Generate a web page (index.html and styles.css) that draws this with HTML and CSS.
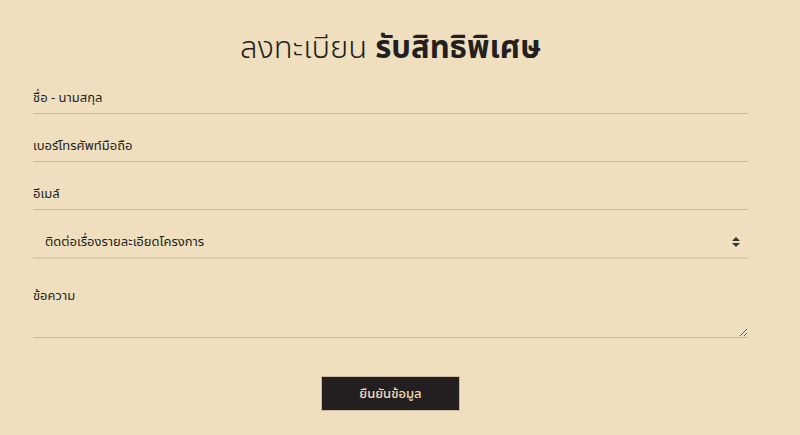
FILE: index.html
```html
<!DOCTYPE html>
<html lang="th">
<head>
    <meta charset="UTF-8">
    <meta name="viewport" content="width=device-width, initial-scale=1.0">
    <title>ลงทะเบียน รับสิทธิพิเศษ</title>
    <link rel="stylesheet" href="styles.css">
</head>
<body>
    <div class="register">
        <h1 class="register-title">ลงทะเบียน <strong>รับสิทธิพิเศษ</strong></h1>

        <!-- ฟอร์มลงทะเบียน -->
        <form class="register-form">
            <input class="field" type="text" placeholder="ชื่อ - นามสกุล">
            <input class="field" type="tel" placeholder="เบอร์โทรศัพท์มือถือ">
            <input class="field" type="email" placeholder="อีเมล์">
            <div class="select-wrap">
                <select class="field field-select">
                    <option>ติดต่อเรื่องรายละเอียดโครงการ</option>
                    <option>นัดชมโครงการ</option>
                    <option>อื่นๆ</option>
                </select>
                <svg class="select-arrow" width="8" height="10" viewBox="0 0 8 10">
                    <path d="M4 0 L8 4 H0 Z M0 6 H8 L4 10 Z" fill="#333"/>
                </svg>
            </div>
            <textarea class="field field-area" placeholder="ข้อความ"></textarea>
            <div class="actions">
                <button type="submit" class="btn-submit">ยืนยันข้อมูล</button>
            </div>
        </form>
    </div>
</body>
</html>
```

FILE: styles.css
```css
body {
    margin: 0;
    background: #efdfbf;
    font-family: "Noto Sans", "Noto Sans Thai", sans-serif;
    color: #231f20;
}
.register {
    width: 715px;
    margin-left: 33px;
    padding-top: 27px;
}
.register-title {
    margin: 0 0 1px;
    text-align: center;
    font-size: 31px;
    font-weight: 300;
    line-height: 38px;
}
.register-title strong {
    font-weight: 700;
}
.register-form {
    display: flex;
    flex-direction: column;
}
.field {
    display: block;
    width: 100%;
    box-sizing: border-box;
    height: 48px;
    padding: 14px 0 0;
    border: none;
    border-bottom: 1px solid #c9b999;
    background: transparent;
    font-family: inherit;
    font-size: 13px;
    color: #231f20;
    outline: none;
}
.field::placeholder {
    color: #231f20;
    opacity: 1;
}
.select-wrap {
    position: relative;
}
.field-select {
    -webkit-appearance: none;
    appearance: none;
    height: 49px;
    padding-left: 12px;
    border-bottom: 2px solid #ddcdaf;
}
.select-arrow {
    position: absolute;
    right: 8px;
    top: 27px;
    pointer-events: none;
}
.field-area {
    height: 79px;
    padding-top: 27px;
    resize: vertical;
}
.actions {
    display: flex;
    justify-content: center;
    padding-top: 38px;
}
.btn-submit {
    width: 139px;
    height: 35px;
    border: 1px solid #c9b999;
    background: #231f20;
    color: #efdfbf;
    font-family: inherit;
    font-size: 13px;
    font-weight: 500;
    cursor: pointer;
}
```
